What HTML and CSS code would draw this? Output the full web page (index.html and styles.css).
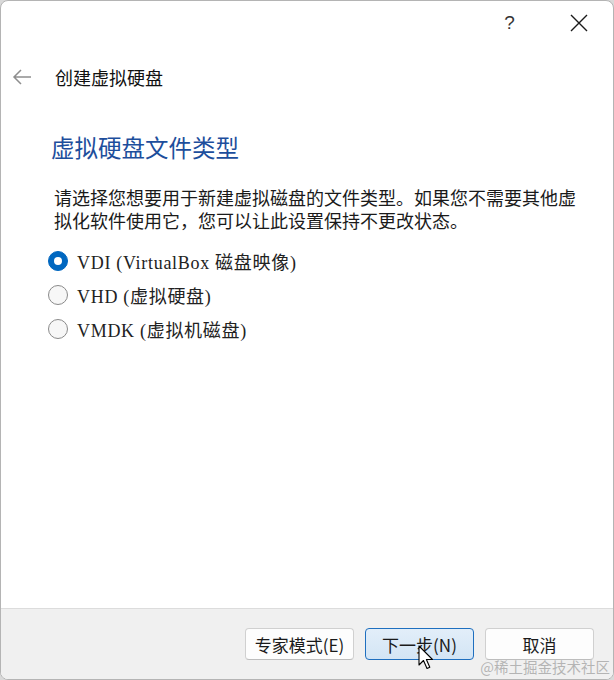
FILE: index.html
```html
<!DOCTYPE html>
<html lang="zh-CN">
<head>
    <meta charset="UTF-8">
    <title>创建虚拟硬盘</title>
    <link rel="stylesheet" href="styles.css">
</head>
<body>
    <div class="window">
        <div class="titlebar">
            <span class="capbtn help">?</span>
            <span class="capbtn">
                <svg width="18" height="18" viewBox="0 0 18 18">
                    <path d="M1 1 L17 17 M17 1 L1 17" stroke="#1a1a1a" stroke-width="1.4" fill="none"/>
                </svg>
            </span>
        </div>

        <div class="header">
            <svg class="back" width="20" height="16" viewBox="0 0 20 16">
                <path d="M19 8 H2 M9 1 L2 8 L9 15" stroke="#8e8e8e" stroke-width="1.5" fill="none"/>
            </svg>
            <span class="header-title">创建虚拟硬盘</span>
        </div>

        <div class="content">
            <h1>虚拟硬盘文件类型</h1>
            <p class="beschreibung">请选择您想要用于新建虚拟磁盘的文件类型。如果您不需要其他虚拟化软件使用它，您可以让此设置保持不更改状态。</p>

            <label class="option">
                <input type="radio" name="typ" checked>
                <span>VDI (VirtualBox 磁盘映像)</span>
            </label>
            <label class="option">
                <input type="radio" name="typ">
                <span>VHD (虚拟硬盘)</span>
            </label>
            <label class="option">
                <input type="radio" name="typ">
                <span>VMDK (虚拟机磁盘)</span>
            </label>
        </div>

        <div class="footer">
            <button class="knopf">专家模式(E)</button>
            <button class="knopf standard">下一步(N)</button>
            <button class="knopf">取消</button>
        </div>

        <svg class="cursor" width="16" height="26" viewBox="0 0 16 26">
            <path d="M1 1 L1 20 L5.5 15.5 L9 23.5 L11.8 22.3 L8.4 14.5 L14.5 14.5 Z" fill="#fff" stroke="#000" stroke-width="1.1" stroke-linejoin="round"/>
        </svg>
        <span class="wasserzeichen">@稀土掘金技术社区</span>
    </div>
</body>
</html>
```

FILE: styles.css
```css
* {
    box-sizing: border-box;
}

body {
    margin: 0;
    padding: 0;
    background-color: #d9d9d9;
    font-family: "Noto Sans CJK SC", sans-serif;
}

.window {
    position: relative;
    width: 614px;
    height: 680px;
    display: flex;
    flex-direction: column;
    background-color: #fff;
    border: 1px solid #b4b4b4;
    border-radius: 8px;
    overflow: hidden;
}

.titlebar {
    height: 43px;
    display: flex;
    justify-content: flex-end;
}

.capbtn {
    width: 69px;
    display: flex;
    align-items: center;
    justify-content: center;
    color: #222;
}

.help {
    font-family: "Liberation Sans", sans-serif;
    font-size: 19px;
    font-weight: 300;
    color: #333;
}

.header {
    height: 66px;
    display: flex;
    align-items: center;
    padding-left: 11px;
}

.back {
    margin-right: 23px;
}

.header-title {
    font-size: 18px;
    color: #111;
}

.content {
    flex: 1;
    padding: 0 24px 0 50px;
}

h1 {
    margin: 21px 0 0 0;
    font-size: 23.5px;
    line-height: 32px;
    font-weight: 400;
    color: #1d4e9c;
}

.beschreibung {
    width: 532px;
    margin: 23px 0 0 3px;
    font-size: 18px;
    line-height: 23px;
    color: #1a1a1a;
}

.option {
    display: flex;
    align-items: center;
    height: 34px;
    margin-left: -3px;
    font-family: "Liberation Serif", "Noto Sans CJK SC", serif;
    font-size: 18px;
    letter-spacing: 0.7px;
    color: #222;
}

.beschreibung + .option {
    margin-top: 12px;
}

.option input {
    appearance: none;
    width: 20px;
    height: 20px;
    margin: 0 9px 0 0;
    border: 1px solid #8a8a8a;
    border-radius: 50%;
    background-color: #f7f7f7;
    display: flex;
    align-items: center;
    justify-content: center;
}

.option input:checked {
    background-color: #0067c0;
    border-color: #0067c0;
}

.option input:checked::after {
    content: "";
    width: 8px;
    height: 8px;
    border-radius: 50%;
    background-color: #fff;
}

.footer {
    height: 71px;
    display: flex;
    justify-content: flex-end;
    align-items: flex-start;
    gap: 11px;
    padding: 19px 19px 0 0;
    background-color: #f0f0f0;
    border-top: 1px solid #dcdcdc;
}

.knopf {
    width: 109px;
    height: 32px;
    padding: 0;
    font-family: "Noto Sans CJK SC", sans-serif;
    font-size: 17px;
    color: #1a1a1a;
    background-color: #fdfdfd;
    border: 1px solid #d0d0d0;
    border-bottom-color: #bdbdbd;
    border-radius: 4px;
}

.knopf.standard {
    background: linear-gradient(#e2eef9, #d3e5f5);
    border: 1px solid #1f6fbf;
}

.cursor {
    position: absolute;
    left: 417px;
    top: 644px;
}

.wasserzeichen {
    position: absolute;
    right: 3px;
    bottom: 2px;
    font-size: 14.5px;
    color: rgba(160, 160, 160, 0.75);
}
```
